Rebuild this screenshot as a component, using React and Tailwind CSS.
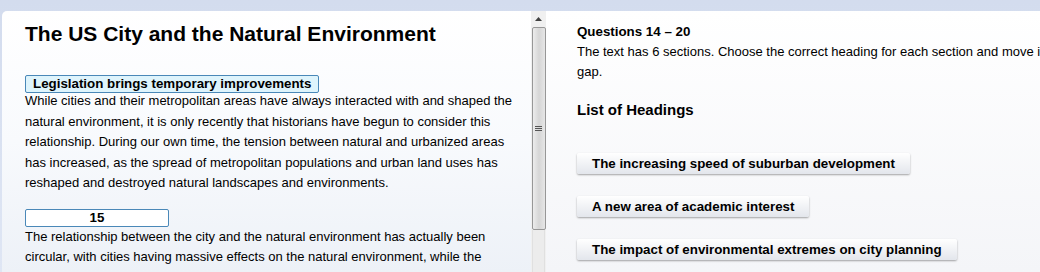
import React from "react";

const font = { fontFamily: '"Liberation Sans", Arial, sans-serif' };

function HeadingButton({ children }) {
  return (
    <div className="flex">
      <div className="h-[21px] px-[15px] flex items-center rounded-[2px] bg-gradient-to-b from-white to-[#e3e6ec] shadow-[0_1px_2px_rgba(0,0,0,0.35)] text-[13.33px] font-bold leading-[21px] text-black whitespace-nowrap">
        {children}
      </div>
    </div>
  );
}

function Scrollbar() {
  return (
    <div className="w-[15px] shrink-0 flex flex-col bg-[#f0f0f0]">
      <div className="h-[16px] flex items-center justify-center">
        <svg width="7" height="4" viewBox="0 0 7 4">
          <path d="M0 4 L3.5 0 L7 4 Z" fill="#404040" />
        </svg>
      </div>
      <div className="h-[203px] mx-[0.5px] rounded-[2px] border border-[#979797] bg-gradient-to-r from-[#ececec] via-[#d6d6d6] to-[#e6e6e6] flex items-center justify-center">
        <div className="flex flex-col gap-[1px]">
          <div className="w-[7px] h-[1px] bg-[#555]" />
          <div className="w-[7px] h-[1px] bg-[#555]" />
          <div className="w-[7px] h-[1px] bg-[#555]" />
        </div>
      </div>
      <div className="flex-1 mx-[1px] bg-[#ececec] border-x border-[#e0e0e0]" />
    </div>
  );
}

export default function App() {
  return (
    <div
      className="w-[1040px] h-[272px] overflow-hidden bg-gradient-to-b from-[#d3dcee] to-[#dfe6f4] flex pt-[11px] pl-[2px]"
      style={font}
    >
      {/* Left panel */}
      <div className="w-[529px] shrink-0 rounded-tl-[5px] bg-gradient-to-b from-white via-[#f8fafd] to-[#edf1f7] pl-[23px] pr-[14px] pt-[11px]">
        <h1 className="text-[21px] font-bold leading-[24px] text-black">
          The US City and the Natural Environment
        </h1>
        <div className="mt-[29px] flex">
          <div className="h-[18px] px-[7px] flex items-center border border-[#4a88b8] bg-[#def4fc] rounded-[2px] text-[13.33px] font-bold leading-[16px] text-black whitespace-nowrap">
            Legislation brings temporary improvements
          </div>
        </div>
        <p className="mt-[-2px] text-[13px] leading-[20.5px] text-black">
          While cities and their metropolitan areas have always interacted with
          and shaped the natural environment, it is only recently that
          historians have begun to consider this relationship. During our own
          time, the tension between natural and urbanized areas has increased,
          as the spread of metropolitan populations and urban land uses has
          reshaped and destroyed natural landscapes and environments.
        </p>
        <div className="mt-[15px] flex">
          <div className="w-[144px] h-[18px] flex items-center justify-center border border-[#4a88b8] bg-white rounded-[2px] text-[13.33px] font-bold leading-[16px] text-black">
            15
          </div>
        </div>
        <p className="mt-[0px] text-[13px] leading-[20.5px] text-black">
          The relationship between the city and the natural environment has
          actually been circular, with cities having massive effects on the
          natural environment, while the natural environment, in turn, has
          profoundly shaped urban configurations and lives.
        </p>
      </div>

      <Scrollbar />

      {/* Right panel */}
      <div className="flex-1 min-w-0 bg-gradient-to-b from-white to-[#f4f5f8] pl-[31px] pt-[11px]">
        <div className="w-[540px]">
          <div className="text-[13.33px] font-bold leading-[20px] text-black">
            Questions 14 – 20
          </div>
          <p className="text-[13px] leading-[20px] text-black">
            The text has 6 sections. Choose the correct heading for each section
            and move it into the gap.
          </p>
          <h2 className="mt-[18px] text-[15px] font-bold leading-[20px] text-black">
            List of Headings
          </h2>
          <div className="mt-[33px] flex flex-col gap-[22px]">
            <HeadingButton>The increasing speed of suburban development</HeadingButton>
            <HeadingButton>A new area of academic interest</HeadingButton>
            <HeadingButton>The impact of environmental extremes on city planning</HeadingButton>
          </div>
        </div>
      </div>
    </div>
  );
}
